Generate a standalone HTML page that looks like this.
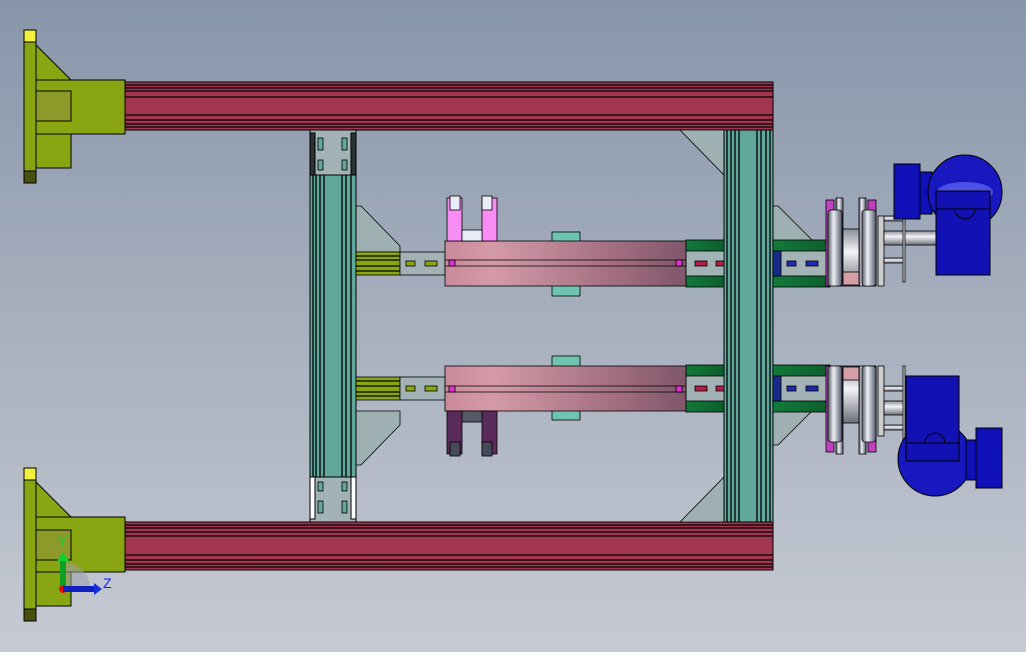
<!DOCTYPE html>
<html><head><style>html,body{margin:0;padding:0;width:1026px;height:652px;overflow:hidden}</style></head><body>
<svg width="1026" height="652" viewBox="0 0 1026 652" xmlns="http://www.w3.org/2000/svg" font-family="Liberation Sans, sans-serif">
<defs>
<linearGradient id="bg" x1="0" y1="0" x2="0" y2="1"><stop offset="0" stop-color="#8896aa"/><stop offset="1" stop-color="#c6cad3"/></linearGradient>
<linearGradient id="pk" x1="0" y1="0" x2="1" y2="0"><stop offset="0" stop-color="#c98a9a"/><stop offset="0.2" stop-color="#d49aa8"/><stop offset="0.7" stop-color="#a26f80"/><stop offset="1" stop-color="#80566a"/></linearGradient>
<linearGradient id="sil" x1="0" y1="0" x2="1" y2="0"><stop offset="0" stop-color="#555a6a"/><stop offset="0.4" stop-color="#eef0f6"/><stop offset="1" stop-color="#50566a"/></linearGradient>
<linearGradient id="shaft" x1="0" y1="0" x2="0" y2="1"><stop offset="0" stop-color="#8a8e98"/><stop offset="0.4" stop-color="#f4f4f8"/><stop offset="1" stop-color="#6a6e78"/></linearGradient>
<linearGradient id="gr" x1="0" y1="0" x2="1" y2="0"><stop offset="0" stop-color="#127a3a"/><stop offset="1" stop-color="#0d5e2c"/></linearGradient>
</defs>
<rect width="1026" height="652" fill="url(#bg)"/>

<g stroke="#000" stroke-width="1">
 <polygon points="36,45 71,80 71,168 36,168" fill="#8aa512" />
 <rect x="36" y="80" width="89" height="54" fill="#8aa512"/>
 <rect x="36" y="91" width="35" height="30" fill="#8c9a2a"/>
 <rect x="24" y="30" width="12" height="153" fill="#8aa512"/>
 <rect x="24" y="30" width="12" height="12" fill="#f2f03a"/>
 <rect x="24" y="171" width="12" height="12" fill="#4a5010"/>

 <polygon points="36,482 71,517 71,606 36,606" fill="#8aa512"/>
 <rect x="36" y="517" width="89" height="55" fill="#8aa512"/>
 <rect x="36" y="530" width="35" height="30" fill="#8c9a2a"/>
 <rect x="24" y="468" width="12" height="153" fill="#8aa512"/>
 <rect x="24" y="468" width="12" height="12" fill="#f2f03a"/>
 <rect x="24" y="609" width="12" height="12" fill="#4a5010"/>
</g>

<g>
 <rect x="125" y="82" width="648" height="48" fill="#a3364f" stroke="#000"/>
 <g stroke="#000" stroke-width="1.2"><line x1="125" y1="85" x2="773" y2="85"/><line x1="125" y1="88" x2="773" y2="88"/><line x1="125" y1="91" x2="773" y2="91"/><line x1="125" y1="97" x2="773" y2="97"/><line x1="125" y1="115" x2="773" y2="115"/><line x1="125" y1="120" x2="773" y2="120"/><line x1="125" y1="124" x2="773" y2="124"/><line x1="125" y1="127" x2="773" y2="127"/></g>
 <rect x="125" y="522" width="648" height="48" fill="#a3364f" stroke="#000"/>
 <g stroke="#000" stroke-width="1.2"><line x1="125" y1="525" x2="773" y2="525"/><line x1="125" y1="528" x2="773" y2="528"/><line x1="125" y1="532" x2="773" y2="532"/><line x1="125" y1="536" x2="773" y2="536"/><line x1="125" y1="555" x2="773" y2="555"/><line x1="125" y1="560" x2="773" y2="560"/><line x1="125" y1="564" x2="773" y2="564"/><line x1="125" y1="567" x2="773" y2="567"/></g>
</g>

<g fill="#9eb0b2" stroke="#000" stroke-width="0.8">
 <polygon points="680,130 724,130 724,175"/>
 <polygon points="680,522 724,522 724,477"/>
 <polygon points="356,206 361,206 400,246 400,252 356,252"/>
 <polygon points="356,465 361,465 400,425 400,411 356,411"/>
 <polygon points="773,206 778,206 818,246 818,252 773,252"/>
 <polygon points="773,445 778,445 818,405 818,398 773,398"/>
</g>

<g stroke="#000">
 <rect x="310" y="130" width="46" height="392" fill="#62a79b"/>
 <g stroke-width="1.3"><line x1="313" y1="130" x2="313" y2="522"/><line x1="316" y1="130" x2="316" y2="522"/><line x1="320" y1="130" x2="320" y2="522"/><line x1="324" y1="130" x2="324" y2="522"/><line x1="342" y1="130" x2="342" y2="522"/><line x1="346" y1="130" x2="346" y2="522"/><line x1="351" y1="130" x2="351" y2="522"/></g>
 <rect x="310" y="130" width="46" height="45" fill="#a3b2b4"/>
 <rect x="310" y="133" width="5" height="42" fill="#2a3232"/><rect x="351" y="133" width="5" height="42" fill="#2a3232"/>
 <rect x="310" y="477" width="46" height="45" fill="#a3b2b4"/>
 <rect x="310" y="477" width="5" height="42" fill="#fff"/><rect x="351" y="477" width="5" height="42" fill="#fff"/>
 <g fill="#62a79b" stroke-width="0.8"><rect x="318" y="138" width="5" height="12"/><rect x="342" y="138" width="5" height="12"/><rect x="318" y="160" width="5" height="10"/><rect x="342" y="160" width="5" height="10"/><rect x="318" y="482" width="5" height="9"/><rect x="342" y="482" width="5" height="9"/><rect x="318" y="501" width="5" height="12"/><rect x="342" y="501" width="5" height="12"/></g>

 <rect x="724" y="130" width="49" height="392" fill="#62a79b"/>
 <g stroke-width="1.3"><line x1="727" y1="130" x2="727" y2="522"/><line x1="731" y1="130" x2="731" y2="522"/><line x1="735" y1="130" x2="735" y2="522"/><line x1="739" y1="130" x2="739" y2="522"/><line x1="757" y1="130" x2="757" y2="522"/><line x1="761" y1="130" x2="761" y2="522"/><line x1="766" y1="130" x2="766" y2="522"/><line x1="770" y1="130" x2="770" y2="522"/></g>
</g>

<g id="ra" stroke="#000" stroke-width="0.8">
 <rect x="356" y="252" width="44" height="23" fill="#8aa512"/>
 <g stroke-width="1.2"><line x1="356" y1="256" x2="400" y2="256"/><line x1="356" y1="260" x2="400" y2="260"/><line x1="356" y1="266" x2="400" y2="266"/><line x1="356" y1="271" x2="400" y2="271"/></g>
 <rect x="400" y="252" width="45" height="23" fill="#a3b2b4"/>
 <rect x="406" y="261" width="9" height="5" fill="#8aa512"/><rect x="425" y="261" width="12" height="5" fill="#8aa512"/>
 <rect x="686" y="240" width="38" height="47" fill="url(#gr)"/>
 <rect x="686" y="251" width="38" height="25" fill="#a3b2b4"/>
 <rect x="695" y="261" width="12" height="5" fill="#b01f45"/><rect x="716" y="261" width="8" height="5" fill="#b01f45"/>
 <rect x="773" y="240" width="57" height="47" fill="url(#gr)"/>
 <rect x="773" y="251" width="57" height="25" fill="#a3b2b4"/>
 <rect x="773" y="251" width="8" height="25" fill="#1a2a8a"/>
 <rect x="787" y="261" width="9" height="5" fill="#1c2bb0"/><rect x="806" y="261" width="12" height="5" fill="#1c2bb0"/>
 <rect x="552" y="232" width="28" height="64" fill="#6ec4b0"/>
 <rect x="445" y="241" width="241" height="45" fill="url(#pk)"/>
 <line x1="445" y1="260" x2="686" y2="260"/><line x1="445" y1="266" x2="686" y2="266"/>
 <rect x="449" y="260" width="6" height="6" fill="#e030d0"/><rect x="676" y="260" width="6" height="6" fill="#e030d0"/>
</g>
<g stroke="#000" stroke-width="0.8">
 <rect x="447" y="198" width="15" height="43" fill="#f78cf2"/><rect x="482" y="198" width="15" height="43" fill="#f78cf2"/>
 <rect x="450" y="196" width="10" height="14" fill="#e8ecf4"/><rect x="482" y="196" width="10" height="14" fill="#e8ecf4"/>
 <rect x="462" y="230" width="20" height="11" fill="#e8ecf8"/>
</g>
<use href="#ra" transform="translate(0,652) scale(1,-1)"/>
<g stroke="#000" stroke-width="0.8">
 <rect x="447" y="411" width="15" height="43" fill="#5a2a5a"/><rect x="482" y="411" width="15" height="43" fill="#5a2a5a"/>
 <rect x="450" y="442" width="10" height="14" fill="#454a58"/><rect x="482" y="442" width="10" height="14" fill="#454a58"/>
 <rect x="462" y="411" width="20" height="11" fill="#555a66"/>
</g>

<g stroke="#000" stroke-width="0.8">
 <rect x="826" y="200" width="8" height="86" fill="#c040c0"/>
 <rect x="868" y="200" width="8" height="86" fill="#c040c0"/>
 <rect x="836" y="198" width="7" height="88" fill="url(#sil)"/>
 <rect x="859" y="198" width="7" height="88" fill="url(#sil)"/>
 <rect x="828" y="210" width="14" height="76" rx="3" fill="url(#sil)"/>
 <rect x="862" y="210" width="14" height="76" rx="3" fill="url(#sil)"/>
 <rect x="843" y="229" width="16" height="57" fill="url(#shaft)"/>
 <rect x="843" y="272" width="16" height="13" fill="#d4a0a8"/>
 <rect x="878" y="216" width="6" height="70" fill="#ccc"/>
 <rect x="884" y="216" width="20" height="5" fill="url(#shaft)"/>
 <rect x="884" y="231" width="52" height="14" fill="url(#shaft)"/>
 <rect x="884" y="258" width="20" height="5" fill="url(#shaft)"/>
 <rect x="903" y="199" width="2" height="83" fill="#ddd"/>
</g>
<g transform="translate(0,166)"><g stroke="#000" stroke-width="0.8">
 <rect x="826" y="200" width="8" height="86" fill="#c040c0"/>
 <rect x="868" y="200" width="8" height="86" fill="#c040c0"/>
 <rect x="836" y="200" width="7" height="88" fill="url(#sil)"/>
 <rect x="859" y="200" width="7" height="88" fill="url(#sil)"/>
 <rect x="828" y="200" width="14" height="76" rx="3" fill="url(#sil)"/>
 <rect x="862" y="200" width="14" height="76" rx="3" fill="url(#sil)"/>
 <rect x="843" y="200" width="16" height="57" fill="url(#shaft)"/>
 <rect x="843" y="201" width="16" height="13" fill="#d4a0a8"/>
 <rect x="878" y="200" width="6" height="70" fill="#ccc"/>
 <rect x="884" y="220" width="20" height="5" fill="url(#shaft)"/>
 <rect x="884" y="235" width="22" height="14" fill="url(#shaft)"/>
 <rect x="884" y="259" width="20" height="5" fill="url(#shaft)"/>
 <rect x="903" y="200" width="2" height="83" fill="#ddd"/>
</g></g>

<g stroke="#000" stroke-width="1" fill="#1010b8">
 <rect x="894" y="164" width="26" height="55"/>
 <rect x="920" y="172" width="12" height="42"/>
 <circle cx="965" cy="192" r="37" fill="#1818c0"/>
 <ellipse cx="965" cy="192" rx="28" ry="10" fill="#4a50e8" stroke="none"/>
 <rect x="936" y="191" width="54" height="84" fill="#1212b4"/>
 <line x1="936" y1="209" x2="990" y2="209"/>
 <path d="M955 209 a10 10 0 0 0 20 0" fill="none"/>

 <circle cx="935" cy="459" r="37" fill="#1818c0"/>
 <rect x="906" y="376" width="53" height="85" fill="#1212b4"/>
 <line x1="906" y1="443" x2="959" y2="443"/>
 <path d="M925 443 a10 10 0 0 1 20 0" fill="none"/>
 <rect x="966" y="440" width="10" height="40"/>
 <rect x="976" y="428" width="26" height="60"/>
</g>

<g>
 <path d="M63 589 L63 562 A27 27 0 0 1 90 589 Z" fill="#9a9ea8" opacity="0.55"/>
 <rect x="60" y="560" width="6" height="30" fill="#0fa020"/>
 <polygon points="57,561 63,552 69,561" fill="#10d030"/>
 <circle cx="63" cy="589" r="4" fill="#e01010"/>
 <rect x="63" y="586" width="32" height="6" fill="#1020c0"/>
 <polygon points="94,583 102,589 94,595" fill="#1030e0"/>
 <text x="58" y="546" font-size="14" fill="#10d030">Y</text>
 <text x="103" y="588" font-size="14" fill="#1020ff">Z</text>
</g>
</svg>
</body></html>
